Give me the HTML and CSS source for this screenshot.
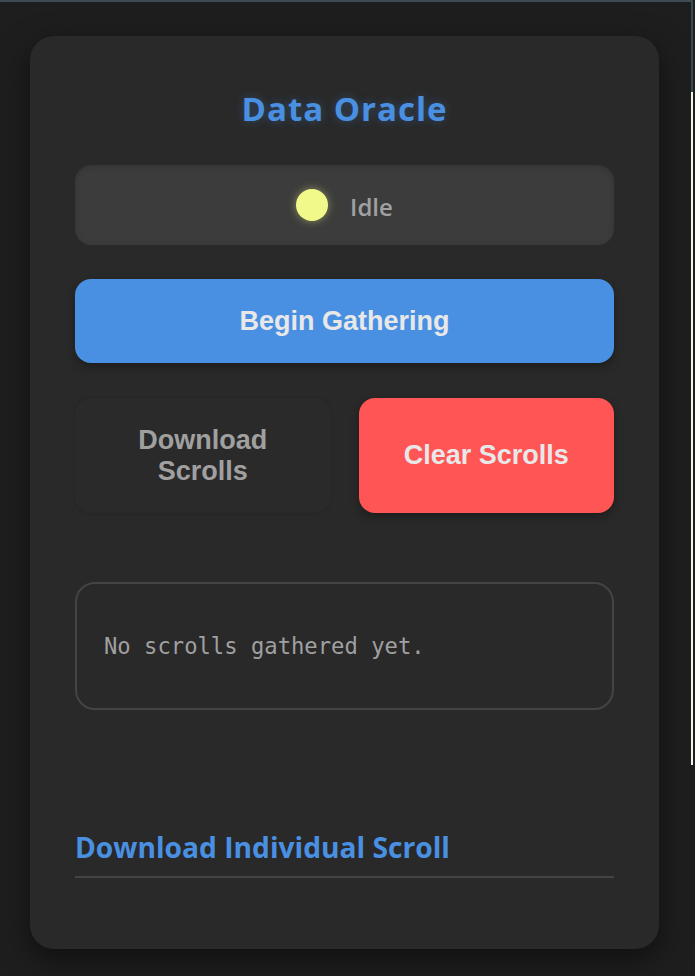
FILE: index.html
```html
<!DOCTYPE html>
<html lang="en">
<head>
<meta charset="utf-8">
<title>Data Oracle</title>
<link rel="stylesheet" href="styles.css">
</head>
<body>
<div class="edge"></div>
<main class="card">
  <h1 class="title">Data Oracle</h1>
  <div class="status">
    <span class="dot"></span>
    <span class="status-text">Idle</span>
  </div>
  <button class="btn btn-primary">Begin Gathering</button>
  <div class="btn-row">
    <button class="btn btn-muted">Download Scrolls</button>
    <button class="btn btn-danger">Clear Scrolls</button>
  </div>
  <div class="log">No scrolls gathered yet.</div>
  <h2 class="section-title">Download Individual Scroll</h2>
</main>
</body>
</html>
```
FILE: styles.css
```css
* { box-sizing: border-box; }
html, body { height: 100%; }
body {
  margin: 0;
  background: #1e1e1e;
  border-top: 2px solid #3d4b55;
  overflow: hidden;
  font-family: "Open Sans", "Noto Sans", sans-serif;
}
.edge {
  position: fixed;
  top: 0;
  right: 0;
  width: 4px;
  height: 765px;
  background: linear-gradient(to bottom, #3a4850 0, #3a4850 92px, #f4f1e6 92px);
  border-right: 2px solid #1a2226;
}
.card {
  margin: 34px 36px 0 30px;
  height: 913px;
  background: #292929;
  border-radius: 24px;
  box-shadow: 0 10px 30px rgba(0,0,0,0.5);
  padding: 45px 45px 0 45px;
  display: flex;
  flex-direction: column;
}
.title {
  margin: 6px 0 0;
  text-align: center;
  color: #4a90e2;
  font-size: 33px;
  letter-spacing: 1px;
  line-height: 44px;
  font-weight: 700;
  text-shadow: 0 0 10px rgba(74,144,226,0.35);
}
.status {
  margin-top: 34px;
  height: 80px;
  background: #3c3c3c;
  border-radius: 16px;
  box-shadow: inset 0 2px 6px rgba(0,0,0,0.15);
  display: flex;
  align-items: center;
  justify-content: center;
  gap: 22px;
}
.dot {
  width: 32px;
  height: 32px;
  border-radius: 50%;
  background: #f0f98a;
  box-shadow: 0 0 8px rgba(240,249,138,0.45);
}
.status-text {
  color: #a0a0a0;
  font-size: 24px;
  font-weight: 600;
  margin-top: 2px;
}
.btn {
  border: none;
  padding: 0 20px;
  font-family: "Liberation Sans", Arial, sans-serif;
  font-weight: 700;
  font-size: 27px;
  line-height: 31px;
  border-radius: 16px;
  color: #e8e8e8;
}
.btn-primary {
  margin-top: 34px;
  height: 84px;
  background: #4a90e2;
  box-shadow: 0 4px 10px rgba(0,0,0,0.3);
}
.btn-row {
  margin-top: 35px;
  display: grid;
  grid-template-columns: 1fr 1fr;
  gap: 28px;
}
.btn-row .btn { height: 115px; }
.btn-muted {
  background: #2a2a2a;
  color: #a0a0a0;
  box-shadow: 0 0 3px rgba(0,0,0,0.15);
}
.btn-danger {
  background: #ff5555;
  box-shadow: 0 4px 10px rgba(0,0,0,0.3);
}
.log {
  margin-top: 69px;
  height: 128px;
  border: 2px solid #444;
  border-radius: 20px;
  padding: 0 27px;
  display: flex;
  align-items: center;
  color: #a0a0a0;
  font-family: "DejaVu Sans Mono", "Liberation Mono", monospace;
  font-size: 22.2px;
}
.section-title {
  margin: 118px 0 0;
  color: #4a90e2;
  font-size: 28.2px;
  line-height: 38px;
  font-weight: 700;
  padding-bottom: 10px;
  border-bottom: 2px solid #444;
}
```
